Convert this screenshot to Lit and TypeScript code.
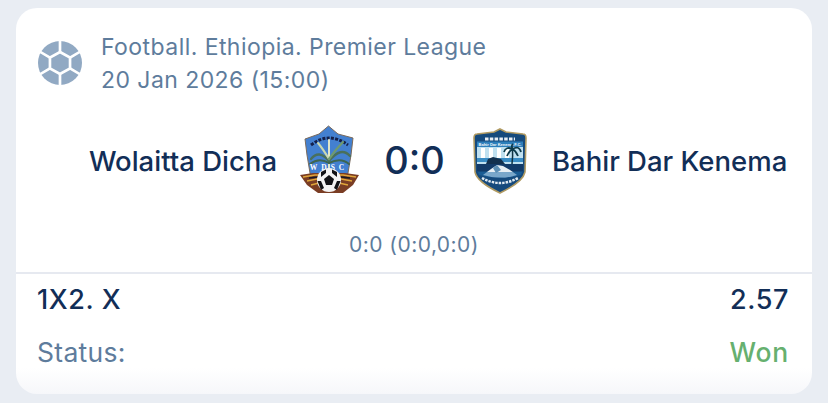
import { LitElement, html, css, svg } from "lit";
import { customElement } from "lit/decorators.js";

const ball = svg`<svg width="44" height="44" viewBox="0 0 46 46">
  <circle cx="23" cy="23" r="23" fill="#91a9c3"/>
  <g fill="none" stroke="#fff" stroke-width="2.800">
    <polygon points="23,11.500 33.500,17.300 33.500,28.700 23,34.500 12.500,28.700 12.500,17.300"/>
    <path d="M23 11.500V0M33.500 17.300L46 10M33.500 28.700L46 36M23 34.500V46M12.500 28.700L0 36M12.500 17.300L0 10"/>
  </g>
</svg>`;

const wolaitta = svg`<svg width="62" height="72" viewBox="0 0 62 72">
  <path d="M29.500 1 L39 9 L54 13 L52 30 L48 54 L30 66 L12 54 L8 30 L6 14 L20 9 Z" fill="#4380d0" stroke="#7a6a5c" stroke-width="1"/>
  <path d="M12 20 Q30 6 49 20" stroke="#14204a" stroke-width="3" stroke-dasharray="3 1.300" fill="none"/>
  <g stroke-linecap="round" fill="none">
    <path d="M30 44 Q30 32 30 15" stroke="#dfe6c8" stroke-width="2"/>
    <path d="M30 36 Q20 24 12 34" stroke="#49705c" stroke-width="2.400"/>
    <path d="M30 36 Q42 21 51 31" stroke="#49705c" stroke-width="2.400"/>
    <path d="M30 34 Q24 24 19 18" stroke="#c9d8b0" stroke-width="2"/>
    <path d="M30 34 Q37 24 44 17" stroke="#6f9a70" stroke-width="2.200"/>
    <path d="M30 38 Q20 32 11 39" stroke="#3e6652" stroke-width="2"/>
    <path d="M30 38 Q42 32 50 39" stroke="#3e6652" stroke-width="2"/>
  </g>
  <text x="30" y="45" text-anchor="middle" font-family="Liberation Serif" font-size="7.500" font-weight="700" letter-spacing="4" fill="#ffffff">WDSC</text>
  <path d="M1 50 L14 48 L46 48 L60 50 L54 60 L44 68 L19 68 L8 60 Z" fill="#7a3d24"/>
  <path d="M4 52 L16 50 L44 50 L57 52 M8 56 L18 54 L42 54 L53 56 M12 60 L20 58 L40 58 L49 60" stroke="#e0a63a" stroke-width="1.300" fill="none"/>
  <path d="M10 53 L19 52 M42 52 L51 53" stroke="#1a1a20" stroke-width="1.500"/>
  <circle cx="30" cy="55" r="12" fill="#f3f3f3"/>
  <g fill="#121216">
    <polygon points="30,50 35,54 33,60 27,60 25,54"/>
    <path d="M22 47 L27 44.500 L27 48 L22 52Z"/><path d="M38 47 L33 44.500 L33 48 L38 52Z"/>
    <path d="M18.500 56 L22 56 L25 63 L22 65Z"/><path d="M41.500 56 L38 56 L35 63 L38 65Z"/>
  </g>
</svg>`;

const bahir = svg`<svg width="54" height="66" viewBox="0 0 54 66">
  <path d="M27 1 L33 4 L50 6 Q53 6 53 10 L52 44 Q50 54 27 65 Q4 54 2 44 L1 10 Q1 6 4 6 L21 4 Z" fill="#164a7c" stroke="#b09a62" stroke-width="1.600"/>
  <path d="M12 11 H42" stroke="#e8eef4" stroke-width="3" stroke-dasharray="3.500 1.300"/>
  <path d="M4 13.500 H50 V19 H4Z" fill="#2d7fbb"/>
  <text x="27" y="18" text-anchor="middle" font-family="Liberation Sans" font-size="4" font-weight="700" fill="#f2f6fa">Bahir Dar Kenema F.C.</text>
  <path d="M4 19 H50 V36 H4Z" fill="#bfe0f0"/>
  <g fill="#ffffff"><rect x="8" y="20" width="4" height="10"/><rect x="16" y="20" width="4" height="10"/><rect x="24" y="20" width="4" height="10"/><rect x="32" y="20" width="4" height="10"/></g>
  <path d="M4 30 H50 V34 H4Z" fill="#3a8cc4"/>
  <path d="M39 36 Q40 28 39.500 21" stroke="#0f3344" stroke-width="1.500" fill="none"/>
  <path d="M39.500 21 Q33 18 31 24 M39.500 21 Q46 17 48 24 M39.500 21 Q36 23 34 28 M39.500 21 Q43 23 45 28 M39.500 21 Q38 17 40 16" stroke="#0d3a4a" stroke-width="1.800" fill="none"/>
  <path d="M13 36 L15 31 L20 29 L28 31 L32 36Z" fill="#12304e"/>
  <path d="M4 36 H50 V43 H4Z" fill="#123a68"/>
  <path d="M10 47 L18 41 L24 37 L30 38 L37 42 L44 47 Q27 52 10 47Z" fill="#e8eff4"/>
  <path d="M5 44 H49 L48 47 Q27 53 6 47Z" fill="#1f6ba8" opacity=".55"/>
  <path d="M20 40 L24 37 L28 42 L23 45Z" fill="#5c8fb5"/>
  <path d="M9 50 Q27 60 45 50" stroke="#dfe9f1" stroke-width="2.400" stroke-dasharray="2.500 1" fill="none"/>
</svg>`;

@customElement("app-root")
export class AppRoot extends LitElement {
  static styles = css`
    :host {
      display: block;
      width: 828px;
      height: 403px;
      box-sizing: border-box;
      padding: 8px 16px 9px;
      background: #e9edf3;
      font-family: Inter, "Liberation Sans", sans-serif;
      overflow: hidden;
    }
    .card {
      height: 386px;
      box-sizing: border-box;
      background: linear-gradient(#fff 0, #fff 360px, #f6f7fa 100%);
      border-radius: 21px;
      display: flex;
      flex-direction: column;
    }
    .head {
      display: flex;
      align-items: center;
      gap: 19px;
      padding: 23px 0 0 22px;
      color: #5e7c9c;
      font-size: 23px;
      line-height: 33px;
      letter-spacing: 0.44px;
    }
    .icon { display: flex; margin-top: -2px; }
    .match {
      display: flex;
      align-items: center;
      margin-top: 24px;
      height: 80px;
      color: #122e57;
      font-weight: 500;
    }
    .team { font-size: 27.5px; flex: 0 0 261px; text-align: right; white-space: nowrap; }
    .team.away { flex: 0 0 auto; text-align: left; margin-left: 25px; }
    .logo { display: flex; margin-left: 22px; }
    .logo.b { margin-left: 4px; }
    .score { font-size: 38px; width: 109px; text-align: center; font-weight: 500; margin-left: -1px; margin-top: -2px; }
    .sub {
      margin-top: 31px;
      text-align: center;
      color: #5e7c9c;
      font-size: 21px;
      line-height: 26px;
      letter-spacing: 0.46px;
    }
    .rule { margin-top: 14px; height: 2px; background: #e6e9f0; }
    .row {
      display: flex;
      justify-content: space-between;
      padding: 0 23px 0 21px;
      line-height: 30px;
    }
    .bet { margin-top: 11px; color: #122e57; font-size: 27px; font-weight: 500; letter-spacing: 0.6px; }
    .status { margin-top: 22px; color: #5e7c9c; font-size: 26.5px; letter-spacing: 0.3px; }
    .won { color: #66b06f; font-weight: 500; letter-spacing: 0.8px; }
  `;

  render() {
    return html`<div class="card">
      <div class="head">
        <div class="icon">${ball}</div>
        <div>Football. Ethiopia. Premier League<br />20 Jan 2026 (15:00)</div>
      </div>
      <div class="match">
        <div class="team">Wolaitta Dicha</div>
        <div class="logo">${wolaitta}</div>
        <div class="score">0:0</div>
        <div class="logo b">${bahir}</div>
        <div class="team away">Bahir Dar Kenema</div>
      </div>
      <div class="sub">0:0 (0:0,0:0)</div>
      <div class="rule"></div>
      <div class="row bet"><span>1X2. X</span><span>2.57</span></div>
      <div class="row status"><span>Status:</span><span class="won">Won</span></div>
    </div>`;
  }
}
